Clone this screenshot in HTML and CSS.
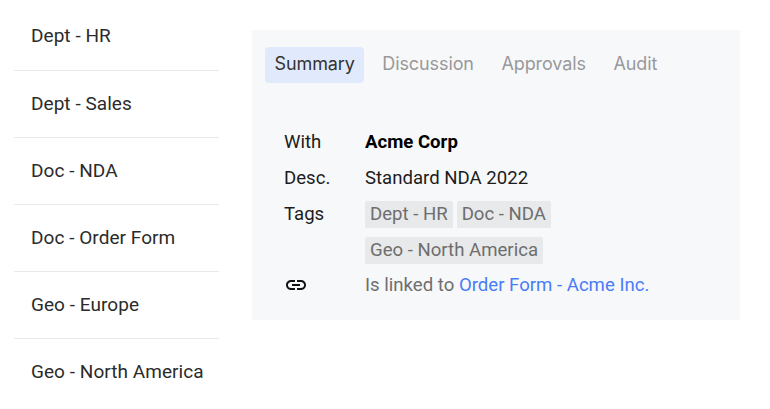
FILE: index.html
```html
<!DOCTYPE html>
<html lang="en">
<head>
<meta charset="utf-8">
<title>Document summary</title>
<link rel="stylesheet" href="styles.css">
</head>
<body>
<div class="page">
  <ul class="list">
    <li class="item">Dept - HR</li>
    <li class="item">Dept - Sales</li>
    <li class="item">Doc - NDA</li>
    <li class="item">Doc - Order Form</li>
    <li class="item">Geo - Europe</li>
    <li class="item">Geo - North America</li>
  </ul>
  <section class="panel">
    <nav class="tabs">
      <span class="tab active">Summary</span>
      <span class="tab">Discussion</span>
      <span class="tab">Approvals</span>
      <span class="tab">Audit</span>
    </nav>
    <div class="details">
      <div class="label">With</div>
      <div class="value strong">Acme Corp</div>
      <div class="label">Desc.</div>
      <div class="value">Standard NDA 2022</div>
      <div class="label">Tags</div>
      <div class="tags">
        <span class="tag">Dept - HR</span>
        <span class="tag">Doc - NDA</span>
        <span class="tag">Geo - North America</span>
      </div>
      <div class="label">
        <svg class="link-icon" width="24" height="24" viewBox="0 0 24 24" fill="#111" aria-hidden="true"><path d="M3.9 12c0-1.71 1.39-3.1 3.1-3.1h4V7H7c-2.76 0-5 2.24-5 5s2.24 5 5 5h4v-1.900H7c-1.710 0-3.100-1.390-3.100-3.100zM8 13h8v-2H8v2zm9-6h-4v1.900h4c1.710 0 3.100 1.390 3.100 3.100s-1.390 3.100-3.100 3.100h-4V17h4c2.760 0 5-2.240 5-5s-2.240-5-5-5z"/></svg>
      </div>
      <div class="value muted">Is linked to <a class="link" href="#">Order Form - Acme Inc.</a></div>
    </div>
  </section>
</div>
</body>
</html>
```
FILE: styles.css
```css
* { box-sizing: border-box; }
html, body { margin: 0; padding: 0; background: #fff; }
body { font-family: Roboto, "Noto Sans", sans-serif; font-size: 19px; color: #222; overflow: hidden; }
.page { display: flex; align-items: flex-start; width: 770px; height: 409px; padding-left: 14px; }
.list { list-style: none; margin: 0; padding: 0; width: 205px; flex: none; }
.item { height: 67px; padding: 0 0 1px 17px; margin: 0; display: flex; align-items: center; border-bottom: 1px solid #eaeaea; color: #2b2b2b; line-height: 24px; letter-spacing: .05px; }
.item:first-child { height: 71px; padding-top: 2px; padding-bottom: 0; }
.item:last-child { border-bottom: 0; }
.panel { width: 488px; height: 290px; margin: 30px 0 0 33px; flex: none; background: #f7f8fa; padding: 17px 13px 0; font-size: 18.6px; }
.tabs { display: flex; gap: 8.5px; }
.tab { height: 36px; padding: 0 9.5px 3px; display: flex; align-items: center; border-radius: 4px; color: #999; font-family: Inter, Roboto, sans-serif; font-size: 18px; letter-spacing: -.1px; }
.tab.active { background: #e1eafc; color: #333; }
.details { display: grid; grid-template-columns: 81px 1fr; margin: 41px 0 0 19px; line-height: 36px; align-items: start; }
.label { height: 36px; display: flex; align-items: center; color: #1c1c1c; }
.value { height: 36px; color: #1c1c1c; }
.strong { font-weight: 700; color: #000; }
.muted { color: #6e6e6e; }
.link { color: #4a7cf6; text-decoration: none; }
.tags { display: flex; flex-wrap: wrap; gap: 9px 4px; padding: 5px 0 3px; width: 300px; }
.tag { height: 27px; line-height: 27px; padding: 0 5px; background: #e8e9eb; border-radius: 2px; color: #6e6e6e; }
.link-icon { display: block; }
```
